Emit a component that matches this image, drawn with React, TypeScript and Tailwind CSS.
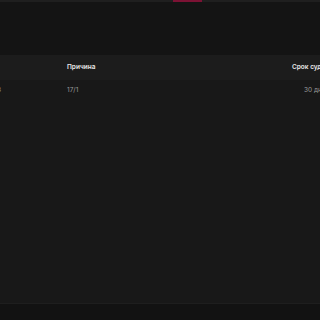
export default function App() {
  return (
    <div className="w-[320px] h-[320px] overflow-hidden bg-[#141414] flex flex-col font-['Inter',sans-serif]">
      {/* top tab strip with active indicator */}
      <div className="h-[2px] bg-[#1f1f1f] flex shrink-0">
        <div className="w-[173px] shrink-0" />
        <div className="w-[29px] h-[2px] bg-[#7c1234] shrink-0" />
      </div>
      <div className="h-[53px] shrink-0" />
      <div className="flex-1 flex flex-col bg-[#181818]">
        {/* header */}
        <div className="h-[25px] bg-[#1c1c1c] flex items-center text-[6.5px] font-semibold text-[#e8e8e8] whitespace-nowrap">
          <div className="w-[67px] shrink-0" />
          <div className="w-[225px] shrink-0">Причина</div>
          <div className="shrink-0">Срок судимости</div>
        </div>
        {/* row */}
        <div className="h-[22px] flex items-center text-[6.5px] text-[#9a9a9a] whitespace-nowrap">
          <div className="w-[67px] shrink-0 -ml-[3px]">3</div>
          <div className="w-[237px] shrink-0 ml-[3px]">17/1</div>
          <div className="shrink-0">30 дней</div>
        </div>
        <div className="flex-1" />
      </div>
      <div className="h-[1px] bg-[#1e1e1e] shrink-0" />
      <div className="h-[16px] bg-[#121212] shrink-0" />
    </div>
  );
}
